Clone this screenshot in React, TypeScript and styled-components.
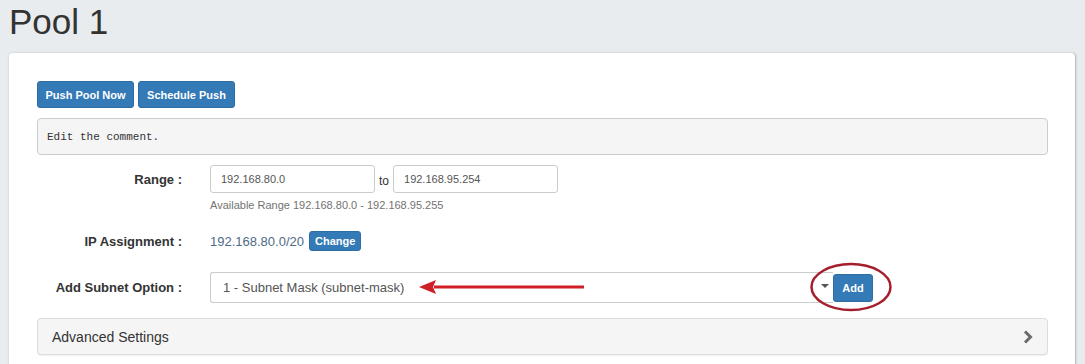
import React from "react";
import styled, { createGlobalStyle } from "styled-components";

const GlobalStyle = createGlobalStyle`
  html, body {
    margin: 0;
    padding: 0;
    background: #e9ecef;
    font-family: "Liberation Sans", Arial, sans-serif;
    color: #333;
  }
  * { box-sizing: border-box; }
`;

const Page = styled.div`
  width: 1085px;
  height: 364px;
  overflow: hidden;
  padding: 0 10px 0 8px;
`;

const Header = styled.div`
  height: 53px;
  padding: 3px 0 0 1px;
`;

const Title = styled.h1`
  margin: 0;
  font-size: 35px;
  font-weight: normal;
  line-height: 38px;
  color: #333;
`;

const Card = styled.div`
  background: #fff;
  border-radius: 4px 4px 0 0;
  border-left: 1px solid #dde1e5;
  box-shadow: 1px 0 2px rgba(0, 0, 0, 0.25);
  padding: 28px 27px 20px 28px;
  min-height: 340px;
`;

const ButtonRow = styled.div`
  display: flex;
  gap: 4px;
`;

const Button = styled.button<{ $size?: "sm" | "md" }>`
  font-family: "Liberation Sans", Arial, sans-serif;
  font-weight: bold;
  font-size: 11px;
  color: #fff;
  background: #337ab7;
  border: 1px solid #2e6da4;
  border-radius: 3px;
  height: ${(p) => (p.$size === "sm" ? "20px" : "27px")};
  padding: ${(p) => (p.$size === "sm" ? "0 5px" : "0 7px")};
  min-width: ${(p) => (p.$size === "sm" ? "50px" : "97px")};
  cursor: pointer;
`;

const CommentBox = styled.div`
  margin-top: 10px;
  height: 37px;
  background: #f5f5f5;
  border: 1px solid #ccc;
  border-radius: 4px;
  padding: 0 9px;
  display: flex;
  align-items: center;
  font-family: "Liberation Mono", "DejaVu Sans Mono", monospace;
  font-size: 11px;
  color: #333;
`;

const FormRow = styled.div<{ $mt: number }>`
  display: grid;
  grid-template-columns: 145px 1fr;
  column-gap: 28px;
  align-items: start;
  margin-top: ${(p) => p.$mt}px;
`;

const Label = styled.label<{ $h: number }>`
  text-align: right;
  font-weight: bold;
  font-size: 13px;
  height: ${(p) => p.$h}px;
  display: flex;
  align-items: center;
  justify-content: flex-end;
`;

const ValueCol = styled.div`
  display: flex;
  flex-direction: column;
  position: relative;
`;

const InlineGroup = styled.div`
  display: flex;
  align-items: center;
`;

const TextInput = styled.input`
  width: 165px;
  height: 28px;
  border: 1px solid #ccc;
  border-radius: 3px;
  padding: 0 10px;
  font-family: "Liberation Sans", Arial, sans-serif;
  font-size: 11px;
  color: #555;
  outline: none;
`;

const ToText = styled.span`
  font-size: 12px;
  margin: 4px 4px 0 4px;
  color: #333;
`;

const HelpText = styled.div`
  margin-top: 5px;
  font-size: 11px;
  line-height: 15px;
  color: #737373;
`;

const IpValue = styled.span`
  font-size: 13px;
  color: #4d6b84;
  margin-right: 5px;
`;

const SelectBox = styled.div`
  width: 623px;
  height: 31px;
  border: 1px solid #ccc;
  border-right: none;
  border-radius: 3px 0 0 3px;
  padding: 0 12px;
  display: flex;
  align-items: center;
  justify-content: space-between;
  font-size: 13px;
  color: #555;
`;

const Caret = styled.span`
  width: 0;
  height: 0;
  border-left: 4px solid transparent;
  border-right: 4px solid transparent;
  border-top: 4px solid #555;
  margin-right: -8px;
  margin-top: -3px;
`;

const AddButton = styled(Button)`
  min-width: 40px;
  width: 40px;
  height: 28px;
  padding: 0;
`;

const Annotation = styled.svg`
  position: absolute;
  overflow: visible;
  pointer-events: none;
`;

const Panel = styled.div`
  margin-top: 15px;
  height: 37px;
  background: #f5f5f5;
  border: 1px solid #ddd;
  border-radius: 4px;
  box-shadow: 0 1px 1px rgba(0, 0, 0, 0.06);
  padding: 0 14px 0 14px;
  display: flex;
  align-items: center;
  justify-content: space-between;
  font-size: 14px;
  color: #333;
`;

export default function App() {
  return (
    <>
      <GlobalStyle />
      <Page>
        <Header>
          <Title>Pool 1</Title>
        </Header>
        <Card>
          <ButtonRow>
            <Button>Push Pool Now</Button>
            <Button>Schedule Push</Button>
          </ButtonRow>
          <CommentBox>Edit the comment.</CommentBox>

          <FormRow $mt={10}>
            <Label $h={28}>Range :</Label>
            <ValueCol>
              <InlineGroup>
                <TextInput defaultValue="192.168.80.0" />
                <ToText>to</ToText>
                <TextInput defaultValue="192.168.95.254" />
              </InlineGroup>
              <HelpText>Available Range 192.168.80.0 - 192.168.95.255</HelpText>
            </ValueCol>
          </FormRow>

          <FormRow $mt={18}>
            <Label $h={20}>IP Assignment :</Label>
            <ValueCol>
              <InlineGroup>
                <IpValue>192.168.80.0/20</IpValue>
                <Button $size="sm">Change</Button>
              </InlineGroup>
            </ValueCol>
          </FormRow>

          <FormRow $mt={21}>
            <Label $h={31}>Add Subnet Option :</Label>
            <ValueCol>
              <InlineGroup>
                <SelectBox>
                  <span>1 - Subnet Mask (subnet-mask)</span>
                  <Caret />
                </SelectBox>
                <AddButton>Add</AddButton>
              </InlineGroup>
              <Annotation
                width="170"
                height="20"
                viewBox="0 0 170 20"
                style={{ left: 208, top: 6 }}
              >
                <path d="M16 7.5 L166 7.5 L166 10.5 L16 10.5 Z" fill="#d11f28" />
                <path d="M1 9 L18 2 L15 9 L18 16 Z" fill="#d11f28" />
              </Annotation>
              <Annotation
                width="84"
                height="50"
                viewBox="0 0 84 50"
                style={{ left: 599, top: -10 }}
              >
                <ellipse
                  cx="42"
                  cy="25"
                  rx="39.5"
                  ry="23"
                  fill="none"
                  stroke="#a61e2b"
                  strokeWidth="2.5"
                />
              </Annotation>
            </ValueCol>
          </FormRow>

          <Panel>
            <span>Advanced Settings</span>
            <svg width="10" height="16" viewBox="0 0 10 16">
              <path
                d="M2 2.5 L7.5 8 L2 13.5"
                fill="none"
                stroke="#6b6b6b"
                strokeWidth="3"
              />
            </svg>
          </Panel>
        </Card>
      </Page>
    </>
  );
}
